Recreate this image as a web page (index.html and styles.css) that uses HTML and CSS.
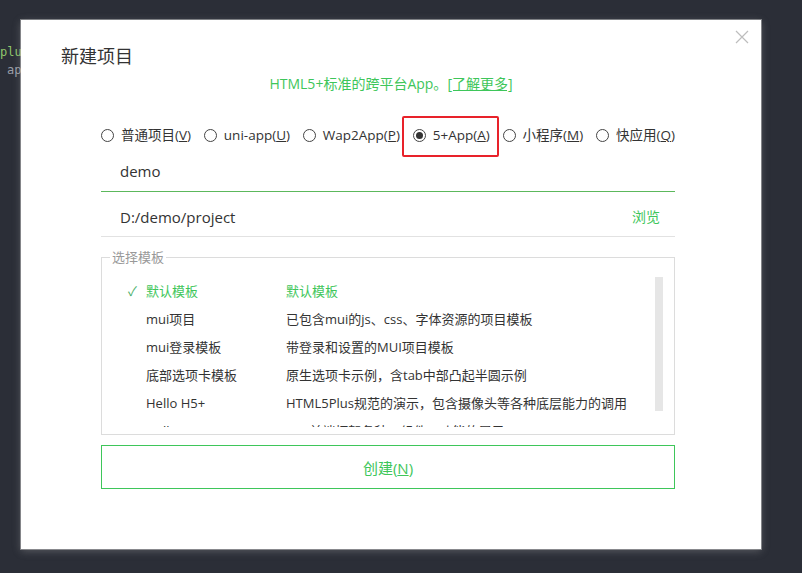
FILE: index.html
```html
<!DOCTYPE html>
<html lang="zh-CN">
<head>
<meta charset="utf-8">
<title>新建项目</title>
<link rel="stylesheet" href="styles.css">
</head>
<body>
<div class="editor">
  <div class="code-line green">plus.runtime.getProperty</div>
  <div class="code-line gray indent">app.version</div>
</div>

<div class="dialog">
  <button class="close" aria-label="关闭">
    <svg width="14" height="14" viewBox="0 0 14 14"><path d="M1 1L13 13M13 1L1 13" stroke="#bdbdbd" stroke-width="1.2" fill="none"/></svg>
  </button>
  <h1 class="title">新建项目</h1>
  <p class="subtitle">HTML5+标准的跨平台App。<a class="more">[了解更多]</a></p>

  <div class="content">
    <div class="radios">
      <label class="radio"><span class="dot"></span><span>普通项目(<u>V</u>)</span></label>
      <label class="radio"><span class="dot"></span><span>uni-app(<u>U</u>)</span></label>
      <label class="radio"><span class="dot"></span><span>Wap2App(<u>P</u>)</span></label>
      <label class="radio checked"><span class="dot"></span><span>5+App(<u>A</u>)</span></label>
      <label class="radio"><span class="dot"></span><span>小程序(<u>M</u>)</span></label>
      <label class="radio"><span class="dot"></span><span>快应用(<u>Q</u>)</span></label>
    </div>

    <div class="field name">demo</div>
    <div class="field path"><span>D:/demo/project</span><span class="browse">浏览</span></div>

    <div class="templates">
      <span class="legend">选择模板</span>
      <div class="list-wrap">
        <div class="list">
          <div class="row selected"><span class="check">✓</span><span>默认模板</span><span>默认模板</span></div>
          <div class="row"><span class="check"></span><span>mui项目</span><span>已包含mui的js、css、字体资源的项目模板</span></div>
          <div class="row"><span class="check"></span><span>mui登录模板</span><span>带登录和设置的MUI项目模板</span></div>
          <div class="row"><span class="check"></span><span>底部选项卡模板</span><span>原生选项卡示例，含tab中部凸起半圆示例</span></div>
          <div class="row"><span class="check"></span><span>Hello H5+</span><span>HTML5Plus规范的演示，包含摄像头等各种底层能力的调用</span></div>
          <div class="row"><span class="check"></span><span>Hello mui</span><span>mui前端框架各种UI组件、功能的展示</span></div>
        </div>
        <div class="track"><div class="thumb"></div></div>
      </div>
    </div>

    <button class="create">创建(<u>N</u>)</button>
  </div>
</div>
</body>
</html>
```

FILE: styles.css
```css
html, body {
  margin: 0;
  padding: 0;
}
body {
  width: 802px;
  height: 573px;
  background: #2b2e37;
  font-family: "Open Sans", "Noto Sans CJK SC", sans-serif;
  color: #333;
  overflow: hidden;
  position: relative;
}
.editor {
  width: 21px;
  overflow: hidden;
  padding-top: 43px;
  font-family: "DejaVu Sans Mono", "Liberation Mono", monospace;
  font-size: 12px;
  line-height: 18px;
}
.code-line { white-space: pre; }
.green { color: #8fc66b; }
.gray { color: #9a9ea8; }
.indent { padding-left: 7px; }

.dialog {
  position: absolute;
  left: 21px;
  top: 20px;
  width: 740px;
  height: 529px;
  background: #fff;
  box-shadow: 0 0 0 1px rgba(200, 200, 200, 0.5), 0 2px 8px rgba(180, 180, 180, 0.35);
  box-sizing: border-box;
  padding-top: 24px;
}
.close {
  position: absolute;
  right: 11px;
  top: 9px;
  width: 16px;
  height: 16px;
  padding: 0;
  border: 0;
  background: none;
  display: flex;
  align-items: center;
  justify-content: center;
}
.title {
  margin: 0 0 0 40px;
  font-size: 18px;
  font-weight: normal;
  line-height: 22px;
  color: #333;
  font-family: "Noto Sans CJK SC", sans-serif;
}
.subtitle {
  margin: 8px 0 0;
  text-align: center;
  font-size: 14px;
  line-height: 20px;
  color: #3ec65a;
}
.more {
  text-decoration: underline;
  color: #3ec65a;
}
.content {
  margin: 29px 86px 0 80px;
}
.radios {
  display: flex;
  justify-content: space-between;
  height: 24px;
  align-items: center;
  font-size: 13.5px;
}
.radio {
  display: flex;
  align-items: center;
  gap: 7px;
  height: 20px;
  line-height: 20px;
  position: relative;
  color: #333;
}
.dot {
  width: 11px;
  height: 11px;
  border: 1px solid #444;
  border-radius: 50%;
  display: flex;
  align-items: center;
  justify-content: center;
}
.checked .dot::before {
  content: "";
  width: 7px;
  height: 7px;
  border-radius: 50%;
  background: #333;
}
.checked::after {
  content: "";
  position: absolute;
  left: -11px;
  right: -9px;
  top: -9px;
  bottom: -12px;
  border: 2px solid #e8222a;
  border-radius: 2px;
}
.field {
  font-size: 15px;
  color: #333;
  padding-left: 19px;
  padding-right: 15px;
}
.name {
  margin-top: 4px;
  height: 40px;
  line-height: 40px;
  border-bottom: 1px solid #5cb85c;
}
.path {
  height: 38px;
  line-height: 38px;
  padding-top: 6px;
  border-bottom: 1px solid #e2e2e2;
  display: flex;
  justify-content: space-between;
}
.browse {
  color: #3ec65a;
  font-size: 14px;
}
.templates {
  position: relative;
  margin-top: 20px;
  border: 1px solid #dcdcdc;
  padding: 19px 10px 7px 24px;
}
.legend {
  position: absolute;
  left: 8px;
  top: -10px;
  padding: 0 2px;
  background: #fff;
  font-size: 13px;
  line-height: 18px;
  color: #999;
}
.list-wrap {
  display: flex;
  height: 150px;
}
.list {
  flex: 1;
  overflow: hidden;
  font-size: 13px;
}
.row {
  display: grid;
  grid-template-columns: 20px 140px 1fr;
  height: 28px;
  line-height: 28px;
  white-space: nowrap;
  color: #333;
}
.row.selected { color: #3ec65a; }
.check {
  color: #4caf6a;
  font-size: 13px;
  padding-left: 2px;
}
.track {
  width: 8px;
  margin-right: 1px;
}
.thumb {
  height: 134px;
  background: #e6e6e6;
}
.create {
  display: block;
  width: 100%;
  margin-top: 10px;
  height: 44px;
  border: 1px solid #3ec65a;
  background: #fff;
  color: #3ec65a;
  font-family: "Open Sans", "Noto Sans CJK SC", sans-serif;
  font-size: 15px;
}
```
